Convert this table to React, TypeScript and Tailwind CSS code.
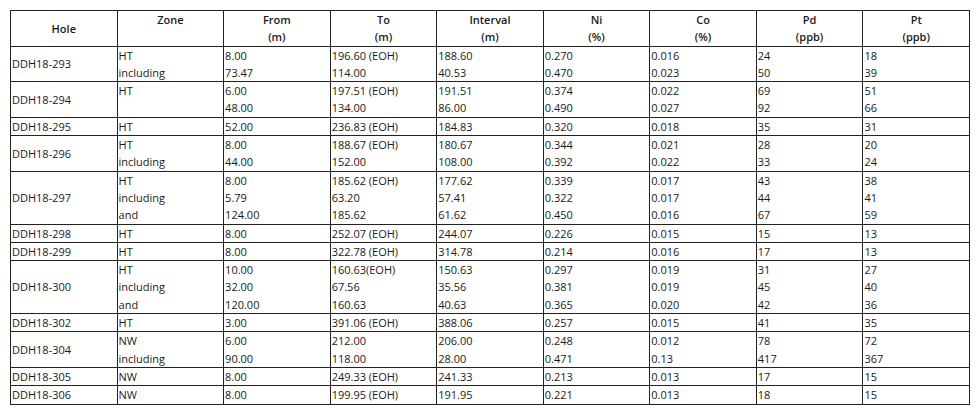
type Row = {
  hole: string;
  zone: string[];
  from: string[];
  to: string[];
  interval: string[];
  ni: string[];
  co: string[];
  pd: string[];
  pt: string[];
};

const rows: Row[] = [
  { hole: "DDH18-293", zone: ["HT", "including"], from: ["8.00", "73.47"], to: ["196.60 (EOH)", "114.00"], interval: ["188.60", "40.53"], ni: ["0.270", "0.470"], co: ["0.016", "0.023"], pd: ["24", "50"], pt: ["18", "39"] },
  { hole: "DDH18-294", zone: ["HT"], from: ["6.00", "48.00"], to: ["197.51 (EOH)", "134.00"], interval: ["191.51", "86.00"], ni: ["0.374", "0.490"], co: ["0.022", "0.027"], pd: ["69", "92"], pt: ["51", "66"] },
  { hole: "DDH18-295", zone: ["HT"], from: ["52.00"], to: ["236.83 (EOH)"], interval: ["184.83"], ni: ["0.320"], co: ["0.018"], pd: ["35"], pt: ["31"] },
  { hole: "DDH18-296", zone: ["HT", "including"], from: ["8.00", "44.00"], to: ["188.67 (EOH)", "152.00"], interval: ["180.67", "108.00"], ni: ["0.344", "0.392"], co: ["0.021", "0.022"], pd: ["28", "33"], pt: ["20", "24"] },
  { hole: "DDH18-297", zone: ["HT", "including", "and"], from: ["8.00", "5.79", "124.00"], to: ["185.62 (EOH)", "63.20", "185.62"], interval: ["177.62", "57.41", "61.62"], ni: ["0.339", "0.322", "0.450"], co: ["0.017", "0.017", "0.016"], pd: ["43", "44", "67"], pt: ["38", "41", "59"] },
  { hole: "DDH18-298", zone: ["HT"], from: ["8.00"], to: ["252.07 (EOH)"], interval: ["244.07"], ni: ["0.226"], co: ["0.015"], pd: ["15"], pt: ["13"] },
  { hole: "DDH18-299", zone: ["HT"], from: ["8.00"], to: ["322.78 (EOH)"], interval: ["314.78"], ni: ["0.214"], co: ["0.016"], pd: ["17"], pt: ["13"] },
  { hole: "DDH18-300", zone: ["HT", "including", "and"], from: ["10.00", "32.00", "120.00"], to: ["160.63(EOH)", "67.56", "160.63"], interval: ["150.63", "35.56", "40.63"], ni: ["0.297", "0.381", "0.365"], co: ["0.019", "0.019", "0.020"], pd: ["31", "45", "42"], pt: ["27", "40", "36"] },
  { hole: "DDH18-302", zone: ["HT"], from: ["3.00"], to: ["391.06 (EOH)"], interval: ["388.06"], ni: ["0.257"], co: ["0.015"], pd: ["41"], pt: ["35"] },
  { hole: "DDH18-304", zone: ["NW", "including"], from: ["6.00", "90.00"], to: ["212.00", "118.00"], interval: ["206.00", "28.00"], ni: ["0.248", "0.471"], co: ["0.012", "0.13"], pd: ["78", "417"], pt: ["72", "367"] },
  { hole: "DDH18-305", zone: ["NW"], from: ["8.00"], to: ["249.33 (EOH)"], interval: ["241.33"], ni: ["0.213"], co: ["0.013"], pd: ["17"], pt: ["15"] },
  { hole: "DDH18-306", zone: ["NW"], from: ["8.00"], to: ["199.95 (EOH)"], interval: ["191.95"], ni: ["0.221"], co: ["0.013"], pd: ["18"], pt: ["15"] },
];

const headers: [string, string][] = [
  ["Zone", ""],
  ["From", "(m)"],
  ["To", "(m)"],
  ["Interval", "(m)"],
  ["Ni", "(%)"],
  ["Co", "(%)"],
  ["Pd", "(ppb)"],
  ["Pt", "(ppb)"],
];

const cell = "border border-[#222] p-0 pl-px align-top text-left";

const Lines = ({ items }: { items: string[] }) => (
  <>
    {items.map((t, i) => (
      <div key={i}>{t}</div>
    ))}
  </>
);

const App = () => {
  return (
    <div className="w-[980px] h-[416px] bg-white pt-[10px] pl-[10px] font-['Open_Sans',sans-serif] text-[11px] leading-[17.3px] text-[#1a1a1a]">
      <table className="w-[960px] table-fixed border-collapse">
        <thead>
          <tr>
            <th className="border border-[#222] p-0 align-middle text-center font-semibold">Hole</th>
            {headers.map(([a, b]) => (
              <th key={a} className="border border-[#222] p-0 align-top text-center font-semibold">
                <div>{a}</div>
                <div>{b || "\u00a0"}</div>
              </th>
            ))}
          </tr>
        </thead>
        <tbody>
          {rows.map((r) => (
            <tr key={r.hole}>
              <td className="border border-[#222] p-0 pl-px align-middle text-left">{r.hole}</td>
              <td className={cell}><Lines items={r.zone} /></td>
              <td className={cell}><Lines items={r.from} /></td>
              <td className={cell}><Lines items={r.to} /></td>
              <td className={cell}><Lines items={r.interval} /></td>
              <td className={cell}><Lines items={r.ni} /></td>
              <td className={cell}><Lines items={r.co} /></td>
              <td className={cell}><Lines items={r.pd} /></td>
              <td className={cell}><Lines items={r.pt} /></td>
            </tr>
          ))}
        </tbody>
      </table>
    </div>
  );
};

export default App;
